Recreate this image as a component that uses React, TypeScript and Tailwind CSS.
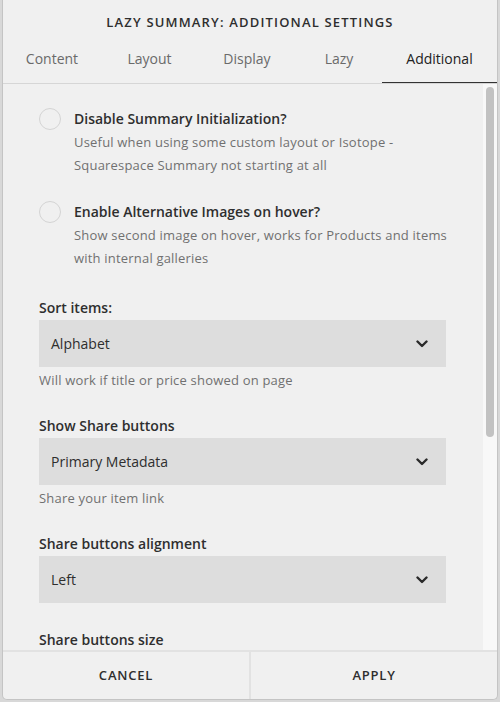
const font = { fontFamily: '"Open Sans", "Liberation Sans", sans-serif' };

const tabs = [
  { label: "Content", w: "w-[98px]" },
  { label: "Layout", w: "w-[97px]" },
  { label: "Display", w: "w-[98px]" },
  { label: "Lazy", w: "w-[86px]" },
];

const Chevron = () => (
  <svg width="12" height="8" viewBox="0 0 12 8" fill="none">
    <path d="M1.5 1.5 6 6l4.5-4.5" stroke="#2a2a2a" strokeWidth="2.4" strokeLinecap="round" strokeLinejoin="round" />
  </svg>
);

const Radio = ({ title, lines }: { title: string; lines: string[] }) => (
  <div className="flex">
    <div className="mt-[-1px] h-[22px] w-[22px] shrink-0 rounded-full border-[1.5px] border-[#d4d4d4]" />
    <div className="ml-[13px] min-w-0">
      <div className="text-[14px] font-semibold leading-5 text-[#2e2e2e]">{title}</div>
      <div className="mt-[2px] whitespace-nowrap text-[13px] leading-[23px] tracking-[0.015em] text-[#707070]">
        {lines.map((l) => (
          <div key={l}>{l}</div>
        ))}
      </div>
    </div>
  </div>
);

const Field = ({ label, value, help }: { label: string; value?: string; help?: string }) => (
  <div>
    <div className="text-[14px] font-semibold leading-5 text-[#2e2e2e]">{label}</div>
    {value && (
      <div className="mt-[2px] flex h-[47px] items-center justify-between bg-[#dddddd] pl-3 pr-[18px]">
        <span className="text-[14px] text-[#2e2e2e]">{value}</span>
        <Chevron />
      </div>
    )}
    {help && <div className="mt-1 text-[13px] leading-[18px] tracking-[0.015em] text-[#707070]">{help}</div>}
  </div>
);

export default function App() {
  return (
    <div className="h-[702px] w-[500px] overflow-hidden bg-[#d8d8d8]" style={font}>
      <div className="ml-[2px] flex h-[700px] w-[496px] flex-col overflow-hidden rounded-b-[5px] border-x border-b border-[#c4c4c4] bg-[#f0f0f0]">
        {/* header */}
        <div className="shrink-0 border-b border-[#d6d6d6]">
          <div className="pt-[13px] text-center text-[13px] font-semibold leading-[18px] tracking-[0.09em] text-[#2e2e2e]">
            LAZY SUMMARY: ADDITIONAL SETTINGS
          </div>
          <div className="mt-[12px] flex">
            {tabs.map((t) => (
              <div key={t.label} className={`${t.w} h-[40px] pt-[5px] text-center text-[14px] text-[#6a6a6a]`}>
                {t.label}
              </div>
            ))}
            <div className="h-[40px] flex-1 border-b border-[#333] pt-[5px] text-center text-[14px] text-[#222]">
              Additional
            </div>
          </div>
        </div>

        {/* body */}
        <div className="flex min-h-0 flex-1">
          <div className="flex-1 overflow-hidden pl-[36px] pr-[37px] pt-[25px]">
            <div className="flex flex-col gap-[25px]">
              <Radio
                title="Disable Summary Initialization?"
                lines={["Useful when using some custom layout or Isotope -", "Squarespace Summary not starting at all"]}
              />
              <Radio
                title="Enable Alternative Images on hover?"
                lines={["Show second image on hover, works for Products and items", "with internal galleries"]}
              />
            </div>
            <div className="mt-[28px] flex flex-col gap-[27px]">
              <Field label="Sort items:" value="Alphabet" help="Will work if title or price showed on page" />
              <Field label="Show Share buttons" value="Primary Metadata" help="Share your item link" />
              <Field label="Share buttons alignment" value="Left" />
              <Field label="Share buttons size" />
            </div>
          </div>
          <div className="w-[14px] shrink-0 bg-[#f8f8f8] pt-[3px]">
            <div className="mx-auto h-[350px] w-[8px] rounded-full bg-[#c2c2c2]" />
          </div>
        </div>

        {/* footer */}
        <div className="flex h-[49px] shrink-0 border-t-2 border-[#e2e2e2]">
          <div className="flex flex-1 items-center justify-center border-r-2 border-[#e2e2e2] text-[13px] font-semibold tracking-[0.06em] text-[#2e2e2e]">
            CANCEL
          </div>
          <div className="flex flex-1 items-center justify-center text-[13px] font-semibold tracking-[0.06em] text-[#2e2e2e]">
            APPLY
          </div>
        </div>
      </div>
    </div>
  );
}
